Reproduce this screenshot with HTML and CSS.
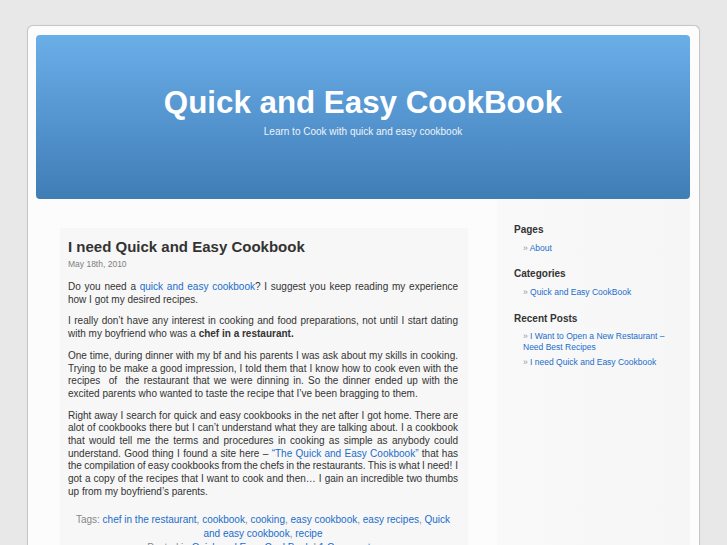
FILE: index.html
```html
<!DOCTYPE html>
<html lang="en">
<head>
<meta charset="utf-8">
<title>Quick and Easy CookBook</title>
<link rel="stylesheet" href="styles.css">
</head>
<body>
<div class="page">
  <header class="header">
    <h1 class="site-title">Quick and Easy CookBook</h1>
    <div class="site-desc">Learn to Cook with quick and easy cookbook</div>
  </header>
  <div class="row">
    <main class="main">
      <article class="post">
        <h2 class="post-title">I need Quick and Easy Cookbook</h2>
        <div class="post-date">May 18th, 2010</div>
        <div class="entry">
          <p>Do you need a <a href="#">quick and easy cookbook</a>? I suggest you keep reading my experience how I got my desired recipes.</p>
          <p>I really don’t have any interest in cooking and food preparations, not until I start dating with my boyfriend who was a <strong>chef in a restaurant.</strong></p>
          <p>One time, during dinner with my bf and his parents I was ask about my skills in cooking. Trying to be make a good impression, I told them that I know how to cook even with the recipes &nbsp;of &nbsp;the restaurant that we were dinning in. So the dinner ended up with the excited parents who wanted to taste the recipe that I’ve been bragging to them.</p>
          <p>Right away I search for quick and easy cookbooks in the net after I got home. There are alot of cookbooks there but I can’t understand what they are talking about. I a cookbook that would tell me the terms and procedures in cooking as simple as anybody could understand. Good thing I found a site here – <a href="#">“The Quick and Easy Cookbook”</a> that has <span class="tight">the compilation of easy cookbooks from the chefs in the restaurants. This is what I need!</span> I got a copy of the recipes that I want to cook and then… I gain an incredible two thumbs up from my boyfriend’s parents.</p>
        </div>
        <p class="postmeta">Tags: <a href="#">chef in the restaurant</a>, <a href="#">cookbook</a>, <a href="#">cooking</a>, <a href="#">easy cookbook</a>, <a href="#">easy recipes</a>, <a href="#">Quick and easy cookbook</a>, <a href="#">recipe</a><br>Posted in <a href="#">Quick and Easy CookBook</a> | <a href="#">1 Comment »</a></p>
      </article>
    </main>
    <aside class="sidebar">
      <h2 class="widget-title">Pages</h2>
      <ul class="widget-list">
        <li><a href="#">About</a></li>
      </ul>
      <h2 class="widget-title">Categories</h2>
      <ul class="widget-list">
        <li><a href="#">Quick and Easy CookBook</a></li>
      </ul>
      <h2 class="widget-title">Recent Posts</h2>
      <ul class="widget-list">
        <li><a href="#">I Want to Open a New Restaurant – Need Best Recipes</a></li>
        <li><a href="#">I need Quick and Easy Cookbook</a></li>
      </ul>
    </aside>
  </div>
</div>
</body>
</html>
```

FILE: styles.css
```css
html, body {
  margin: 0;
  padding: 0;
}
body {
  background: #e8e8e8;
  font-family: "Liberation Sans", Arial, sans-serif;
  color: #333;
  overflow: hidden;
}
a {
  color: #1a6dcc;
  text-decoration: none;
}
.page {
  width: 654px;
  margin: 25px auto 0;
  padding: 9px 9px 0 8px;
  background: #fcfcfc;
  border: 1px solid #c6c6c6;
  border-bottom: none;
  border-radius: 6px 6px 0 0;
  box-shadow: 0 0 1px rgba(0,0,0,0.08);
  min-height: 540px;
}
.header {
  height: 164px;
  border-radius: 4px;
  background: linear-gradient(to bottom, #6aaee8 0%, #5595d0 50%, #3f7db5 100%);
  text-align: center;
  padding-top: 50px;
  box-sizing: border-box;
}
.site-title {
  margin: 0;
  font-size: 31.3px;
  line-height: 36px;
  font-weight: bold;
  color: #fff;
}
.site-desc {
  margin-top: 5px;
  font-size: 10px;
  line-height: 12px;
  color: #eef3f9;
}
.row {
  display: flex;
  align-items: stretch;
  min-height: 360px;
}
.main {
  width: 408px;
  margin-left: 24px;
  padding-top: 29px;
}
.post {
  background: #f7f7f7;
  padding: 10px 10px 0 8px;
}
.post-title {
  margin: 0;
  font-size: 15px;
  line-height: 18px;
  font-weight: bold;
  color: #333;
}
.post-date {
  margin-top: 3px;
  font-size: 8.5px;
  line-height: 11px;
  color: #808080;
}
.entry {
  margin-top: 11px;
}
.entry p {
  margin: 0 0 9px;
  font-size: 10px;
  line-height: 12.7px;
  text-align: justify;
}
.entry .tight {
  word-spacing: -0.7px;
}
.entry strong {
  font-weight: bold;
}
.postmeta {
  margin: 14px 0 0;
  font-size: 10px;
  line-height: 14.4px;
  color: #888;
  text-align: center;
}
.sidebar {
  margin-left: 29px;
  width: 193px;
  box-sizing: border-box;
  padding: 25px 10px 0 17px;
  background: linear-gradient(to right, #f9f9f9 0%, #f6f6f6 100%);
}
.widget-title {
  margin: 0 0 6.5px;
  font-size: 10px;
  line-height: 12px;
  font-weight: bold;
  color: #333;
}
.widget-list {
  list-style: none;
  margin: 0 0 14.5px;
  padding: 0 0 0 9px;
}
.widget-list li {
  font-size: 8.5px;
  line-height: 11.3px;
  margin-bottom: 3.6px;
}
.widget-list li::before {
  content: "\00BB\0020";
  color: #999;
}
```
